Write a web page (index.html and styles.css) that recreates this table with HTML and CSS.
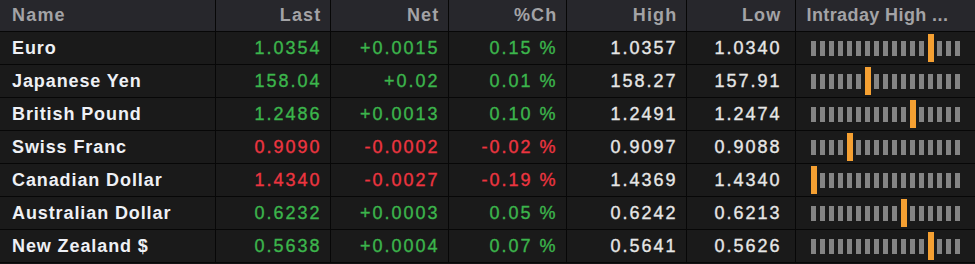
FILE: index.html
```html
<!DOCTYPE html>
<html>
<head>
<meta charset="utf-8">
<link rel="stylesheet" href="styles.css">
</head>
<body>
<table class="quotes">
  <colgroup>
    <col class="c-name"><col class="c-last"><col class="c-net"><col class="c-pct"><col class="c-high"><col class="c-low"><col class="c-range">
  </colgroup>
  <thead>
    <tr>
      <th class="name">Name</th>
      <th class="num">Last</th>
      <th class="num">Net</th>
      <th class="num">%Ch</th>
      <th class="num">High</th>
      <th class="num low">Low</th>
      <th class="range-h">Intraday High ...</th>
    </tr>
  </thead>
  <tbody id="rows"></tbody>
</table>
<script src="app.js"></script>
</body>
</html>
```
FILE: app.js
```js
const data = [
  ["Euro", "1.0354", "+0.0015", "0.15 %", "1.0357", "1.0340", 13, "up"],
  ["Japanese Yen", "158.04", "+0.02", "0.01 %", "158.27", "157.91", 6, "up"],
  ["British Pound", "1.2486", "+0.0013", "0.10 %", "1.2491", "1.2474", 11, "up"],
  ["Swiss Franc", "0.9090", "-0.0002", "-0.02 %", "0.9097", "0.9088", 4, "down"],
  ["Canadian Dollar", "1.4340", "-0.0027", "-0.19 %", "1.4369", "1.4340", 0, "down"],
  ["Australian Dollar", "0.6232", "+0.0003", "0.05 %", "0.6242", "0.6213", 10, "up"],
  ["New Zealand $", "0.5638", "+0.0004", "0.07 %", "0.5641", "0.5626", 13, "up"]
];
const tbody = document.getElementById("rows");
for (const [name, last, net, pct, high, low, slot, dir] of data) {
  const tr = document.createElement("tr");
  let bars = "";
  for (let i = 0; i < 17; i++) {
    bars += i === slot ? '<span class="mark"></span>' : '<span class="tick"></span>';
  }
  tr.innerHTML =
    `<td class="name">${name}</td>` +
    `<td class="num ${dir}">${last}</td>` +
    `<td class="num ${dir}">${net}</td>` +
    `<td class="num ${dir}">${pct}</td>` +
    `<td class="num">${high}</td>` +
    `<td class="num low">${low}</td>` +
    `<td class="range"><div class="bars">${bars}</div></td>`;
  tbody.appendChild(tr);
}
```
FILE: styles.css
```css
html, body {
  margin: 0;
  padding: 0;
  background: #141414;
}
.quotes {
  width: 975px;
  border-collapse: collapse;
  table-layout: fixed;
  font-family: "Liberation Sans", Arial, sans-serif;
  font-size: 18px;
}
.c-name { width: 215px; }
.c-last { width: 115px; }
.c-net { width: 118px; }
.c-pct { width: 118px; }
.c-high { width: 120px; }
.c-low { width: 109px; }
.c-range { width: 180px; }

th, td {
  padding: 0 8px 0 10px;
  border-right: 1px solid #070707;
  border-bottom: 1px solid #070707;
  white-space: nowrap;
  overflow: hidden;
}
th:last-child, td:last-child { border-right: none; }
thead th {
  height: 31px;
  background: #27272c;
  color: #a3a3a6;
  font-weight: 700;
  letter-spacing: 1.2px;
}
tbody td {
  height: 32px;
  background: #1a1a1a;
  color: #e6e6e6;
  letter-spacing: 2px;
  font-weight: 400;
  -webkit-text-stroke: 0.35px currentColor;
}
th.name, td.name {
  text-align: left;
  padding-left: 12px;
}
td.name {
  color: #eef0f5;
  font-weight: 700;
  letter-spacing: 0.9px;
  -webkit-text-stroke: 0;
}
.num { text-align: right; }
.num.low { padding-right: 13px; }
.up { color: #3cb54c; }
.down { color: #ec3540; }
.range-h {
  text-align: left;
  padding-left: 11px;
  letter-spacing: 0.4px;
}
td.range { padding-left: 15px; }
.bars {
  display: flex;
  align-items: center;
  gap: 4px;
  height: 30px;
}
.tick {
  width: 5px;
  height: 15px;
  background: #848484;
}
.mark {
  width: 6px;
  margin-right: -1px;
  height: 28px;
  background: #f5a032;
}
```
